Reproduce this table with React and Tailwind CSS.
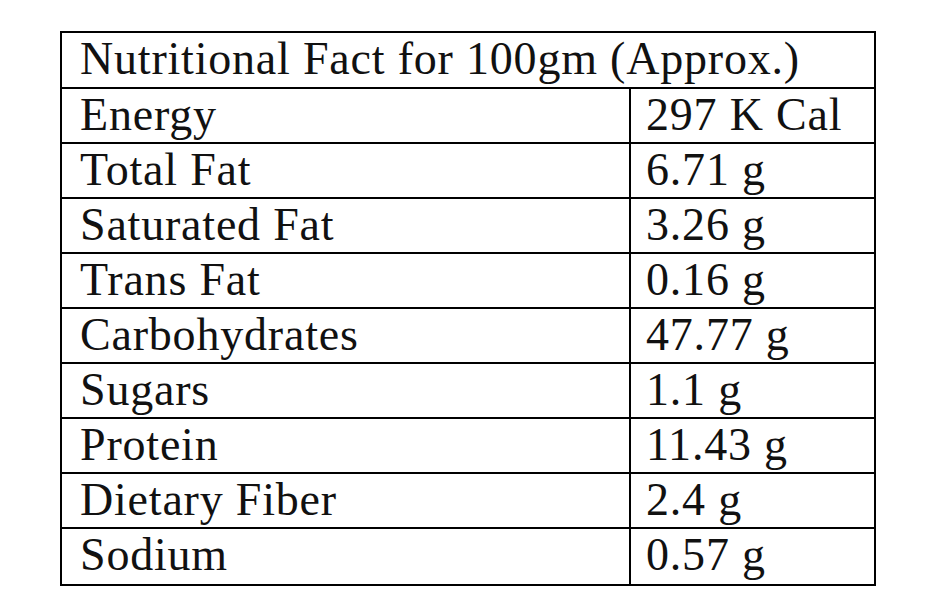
import React from "react";

const rows = [
  ["Energy", "297 K Cal"],
  ["Total Fat", "6.71 g"],
  ["Saturated Fat", "3.26 g"],
  ["Trans Fat", "0.16 g"],
  ["Carbohydrates", "47.77 g"],
  ["Sugars", "1.1 g"],
  ["Protein", "11.43 g"],
  ["Dietary Fiber", "2.4 g"],
  ["Sodium", "0.57 g"],
];

export default function App() {
  return (
    <div className="w-[940px] h-[599px] bg-white pt-[31px] pl-[60px]" style={{ fontFamily: '"Liberation Serif", serif' }}>
      <div className="w-[816px] border-2 border-black text-[46px] leading-[52px] tracking-[0.8px] text-[#111]">
        <div className="h-[56px] pl-[18px] border-b-2 border-black">Nutritional Fact for 100gm (Approx.)</div>
        {rows.map(([k, v], i) => (
          <div key={k} className={`flex h-[55px] ${i < rows.length - 1 ? "border-b-2 border-black" : ""}`}>
            <div className="w-[569px] pl-[18px] border-r-2 border-black">{k}</div>
            <div className="flex-1 pl-[15px]">{v}</div>
          </div>
        ))}
      </div>
    </div>
  );
}
